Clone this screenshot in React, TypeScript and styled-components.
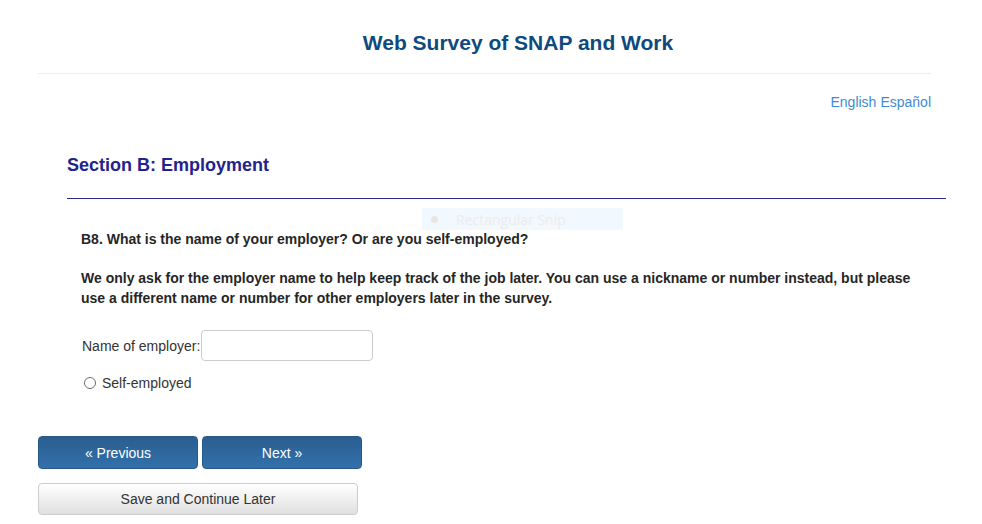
import styled, { createGlobalStyle } from "styled-components";

const GlobalStyle = createGlobalStyle`
  body {
    margin: 0;
    background: #ffffff;
    font-family: "Liberation Sans", Arial, sans-serif;
    color: #333333;
  }
`;

const Page = styled.div`
  position: relative;
  width: 982px;
  height: 524px;
  overflow: hidden;
`;

const Header = styled.header`
  margin: 0 51px 0 38px;
  padding: 31px 0 18px 0;
  border-bottom: 1px solid #eeeeee;
`;

const Title = styled.h1`
  margin: 0;
  padding-left: 67px;
  text-align: center;
  font-size: 21px;
  line-height: 24px;
  font-weight: bold;
  color: #0f4a7e;
`;

const LangBar = styled.div`
  margin: 18px 51px 0 38px;
  display: flex;
  justify-content: flex-end;
  gap: 4px;
  font-size: 14px;
  line-height: 20px;
`;

const LangLink = styled.a`
  color: #3f8bd0;
  text-decoration: none;
`;

const Section = styled.section`
  margin: 42px 36px 0 67px;
`;

const SectionTitle = styled.h2`
  margin: 0;
  padding: 1px 0 23px 0;
  border-bottom: 1px solid #2b2b8f;
  font-size: 18px;
  line-height: 20px;
  font-weight: bold;
  color: #23238c;
`;

const Question = styled.div`
  padding: 30px 0 0 14px;
`;

const Prompt = styled.p<{ gap: number }>`
  margin: ${({ gap }) => gap}px 0 0 0;
  font-size: 14px;
  line-height: 20px;
  font-weight: bold;
  color: #262626;
  max-width: 835px;
`;

const FieldRow = styled.label`
  margin-top: 22px;
  margin-left: 1px;
  display: flex;
  align-items: center;
  font-size: 14px;
  color: #333333;
`;

const TextInput = styled.input`
  box-sizing: border-box;
  width: 172px;
  height: 31px;
  margin-left: 1px;
  border: 1px solid #cccccc;
  border-radius: 4px;
  padding: 4px 8px;
  font-size: 14px;
`;

const RadioRow = styled.label`
  margin-top: 12px;
  margin-left: 3px;
  display: flex;
  align-items: center;
  gap: 6px;
  font-size: 14px;
  line-height: 20px;
  color: #333333;
`;

const Radio = styled.span`
  box-sizing: border-box;
  width: 12px;
  height: 12px;
  border: 1px solid #6b6b6b;
  border-radius: 50%;
  background: #fff;
`;

const Actions = styled.div`
  margin: 43px 0 0 38px;
  display: flex;
  flex-direction: column;
  gap: 14px;
`;

const NavRow = styled.div`
  display: flex;
  gap: 4px;
`;

const NavButton = styled.button`
  box-sizing: border-box;
  width: 160px;
  height: 33px;
  border: 1px solid #275a8a;
  border-radius: 4px;
  background: linear-gradient(to bottom, #2a5e8f 0%, #3271ab 100%);
  color: #ffffff;
  font-family: "Liberation Sans", Arial, sans-serif;
  font-size: 14px;
  padding: 0;
`;

const SaveButton = styled.button`
  box-sizing: border-box;
  width: 320px;
  height: 32px;
  border: 1px solid #cccccc;
  border-radius: 4px;
  background: linear-gradient(to bottom, #ffffff 0%, #e0e0e0 100%);
  color: #333333;
  font-family: "Liberation Sans", Arial, sans-serif;
  font-size: 14px;
  padding: 0;
`;

const SnipOverlay = styled.div`
  position: absolute;
  left: 422px;
  top: 208px;
  width: 201px;
  height: 22px;
  display: flex;
  align-items: center;
  background: rgba(225, 240, 252, 0.45);
  font-family: "Open Sans", "Liberation Sans", sans-serif;
  font-size: 14px;
  color: #ececec;
`;

const SnipDot = styled.span`
  width: 7px;
  height: 7px;
  margin: 0 18px 0 9px;
  border-radius: 50%;
  background: #e6e6e6;
`;

export default function App() {
  return (
    <Page>
      <GlobalStyle />
      <Header>
        <Title>Web Survey of SNAP and Work</Title>
      </Header>
      <LangBar>
        <LangLink href="#">English</LangLink>
        <LangLink href="#">Español</LangLink>
      </LangBar>
      <Section>
        <SectionTitle>Section B: Employment</SectionTitle>
        <Question>
          <Prompt gap={0}>
            B8. What is the name of your employer? Or are you self-employed?
          </Prompt>
          <Prompt gap={19}>
            We only ask for the employer name to help keep track of the job later. You can use a
            nickname or number instead, but please use a different name or number for other
            employers later in the survey.
          </Prompt>
          <FieldRow>
            Name of employer:
            <TextInput type="text" />
          </FieldRow>
          <RadioRow>
            <Radio />
            Self-employed
          </RadioRow>
        </Question>
      </Section>
      <Actions>
        <NavRow>
          <NavButton>« Previous</NavButton>
          <NavButton>Next »</NavButton>
        </NavRow>
        <SaveButton>Save and Continue Later</SaveButton>
      </Actions>
      <SnipOverlay>
        <SnipDot />
        Rectangular Snip
      </SnipOverlay>
    </Page>
  );
}
